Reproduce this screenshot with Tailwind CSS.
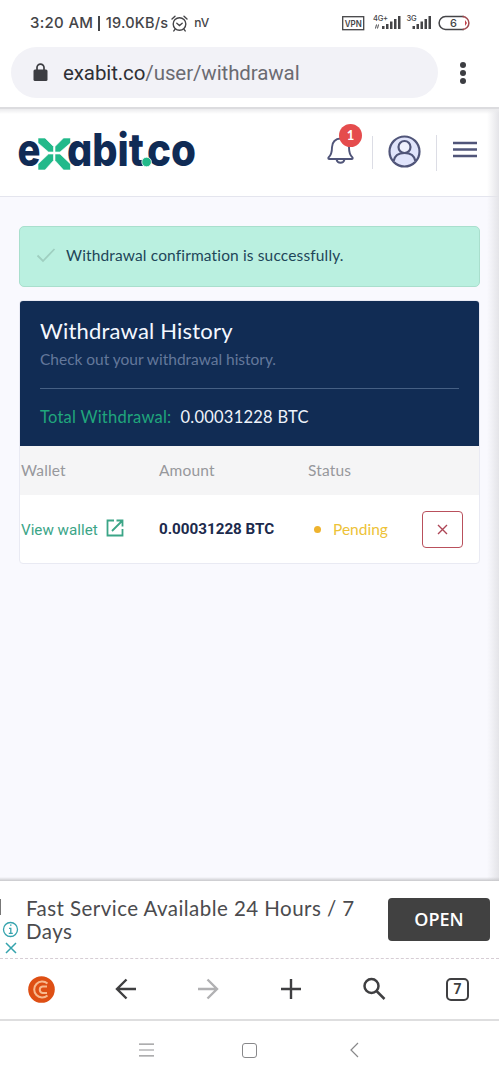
<!DOCTYPE html>
<html lang="en">
<head>
<meta charset="utf-8">
<title>Withdrawal History</title>
<script src="https://cdn.jsdelivr.net/npm/@tailwindcss/browser@4"></script>
</head>
<body class="w-[499px] h-[1080px] overflow-hidden bg-white font-['Lato',sans-serif] flex flex-col whitespace-nowrap">

<!-- status bar -->
<div class="h-[46px] shrink-0 flex items-center pl-[30px] pr-[29px] text-[#444447]">
  <span class="font-['Inter',sans-serif] text-[15px] font-medium tracking-[0.3px]">3:20 AM</span>
  <span class="w-[1.500px] h-[15px] bg-[#444447] ml-[5px] mr-[6px]"></span>
  <span class="font-['Inter',sans-serif] text-[14.500px] font-medium tracking-[0.2px]">19.0KB/s</span>
  <svg class="ml-[3px] size-[17px]" viewBox="0 0 17 17" fill="none" stroke="#444447" stroke-width="1.4" stroke-linecap="round"><circle cx="8.5" cy="9" r="6.3"/><path d="M1 4 4 1.3M16 4 13 1.3M5.8 8.3l2.7 2.2 2.7-2.2M4 14.3l-1.2 1.6M13 14.3l1.2 1.6"/></svg>
  <span class="font-['Inter',sans-serif] text-[12px] font-medium ml-[6px]">nV</span>
  <svg class="ml-auto w-[128px] h-[20px]" viewBox="342 13 128 20" font-family="Inter, sans-serif" fill="#444447">
    <rect x="342.7" y="16.7" width="21" height="13" fill="none" stroke="#444447" stroke-width="1.3"/>
    <text x="344.8" y="26.5" font-size="8.500" font-weight="600" textLength="17" lengthAdjust="spacingAndGlyphs">VPN</text>
    <text x="373" y="20.6" font-size="7.5" font-weight="500" textLength="15">4G+</text>
    <path d="M375.5 28.5l1-4M378.500 24.500l-1 4" stroke="#444447" fill="none"/>
    <path d="M382 26h2.500v3H382zM386 24h2.500v5H386zM390 21.500h2.500v7.500H390zM394 19h2.500v10H394zM398 16h2.500v13H398z"/>
    <text x="406.500" y="20.6" font-size="7.5" font-weight="500" textLength="10">3G</text>
    <path d="M412.500 26h2.500v3h-2.500zM416.500 24h2.500v5h-2.500zM420.500 21.500h2.500v7.500h-2.500zM424.500 19h2.500v10h-2.500zM428.500 16h2.500v13h-2.500z"/>
    <path d="M464 16.600h-18.500a6.400 6.400 0 0 0 0 12.800H464" fill="none" stroke="#444447" stroke-width="1.5"/>
    <path d="M462.500 16.600a6.400 6.400 0 0 1 0 12.800" fill="none" stroke="#a04a50" stroke-width="1.5"/>
    <path d="M465 20v6l2-3z" fill="#c2404a"/>
    <text x="453.500" y="27" font-size="11" font-weight="500" text-anchor="middle">6</text>
  </svg>
</div>

<!-- address bar -->
<div class="h-[63px] shrink-0 flex items-start pt-px pl-[11px] border-b-2 border-[#dcdcdf]">
  <div class="w-[427px] h-[51px] rounded-full bg-[#f2f2f7] flex items-center pl-[22px]">
    <svg class="w-[15px] h-[19px]" viewBox="0 0 15 19"><rect x="0.500" y="6.500" width="14" height="11.500" rx="1.500" fill="#3c3d42"/><path d="M4 7V4.600a3.500 3.500 0 0 1 7 0V7" fill="none" stroke="#3c3d42" stroke-width="1.700"/></svg>
    <span class="font-['Roboto',sans-serif] text-[20.500px] ml-[15px] pt-[2px] text-[#6b6b72] tracking-[-0.1px]"><span class="text-[#2f3035]">exabit.co</span>/user/withdrawal</span>
  </div>
  <div class="ml-[22px] mt-[15px] flex flex-col gap-[2.500px]">
    <span class="size-[5.500px] rounded-full bg-[#3c3d42]"></span>
    <span class="size-[5.500px] rounded-full bg-[#3c3d42]"></span>
    <span class="size-[5.500px] rounded-full bg-[#3c3d42]"></span>
  </div>
</div>

<!-- page -->
<div class="relative h-[772px] shrink-0 bg-[#f9f9fe]">
  <header class="h-[88px] bg-white border-b border-[#e4e5ee] flex items-center pl-[17px] pr-[22px]">
    <svg class="w-[190px] h-[60px]" viewBox="17 123 190 60" font-family="Inter, sans-serif" font-weight="800" font-size="45" fill="#102b55" style="font-feature-settings:'cv11'">
      <text x="17.500" y="166" textLength="23" lengthAdjust="spacingAndGlyphs">e</text>
      <text x="67" y="166" textLength="77" lengthAdjust="spacingAndGlyphs">abit</text>
      <text x="147" y="166" textLength="49" lengthAdjust="spacingAndGlyphs">co</text>
      <g fill="#22b98a" stroke="#fff" stroke-width="0.600">
        <path d="M38 138h7l8.500 8.500v5.500h-5l-10.500-9z"/>
        <path d="M70.500 138h-7L55 146.500v5.500h5l10.500-9z"/>
        <path d="M38 170h7l8.500-9.500V154h-5L38 164z"/>
        <path d="M70.500 170h-7L55 160.500V154h5l10.500 10z"/>
      </g>
      <circle cx="146.600" cy="162" r="4.800" fill="#22b98a" stroke="#fff" stroke-width="0.800"/>
    </svg>
    <div class="ml-auto flex items-center">
      <div class="relative w-[27px] h-[30px] mt-[-5px]">
        <svg class="size-full" viewBox="0 0 27 30" fill="none" stroke="#505579" stroke-width="1.900" stroke-linejoin="round"><path d="M13.500 3.500c-5 0-8.500 3.800-8.500 8.800 0 6-.8 8-3.500 10.200-.5 1 0 1.500.8 1.500h22.400c.8 0 1.300-.5.800-1.500-2.700-2.200-3.500-4.200-3.500-10.200 0-5-3.500-8.800-8.500-8.800z"/><path d="M9.500 24.500c.5 2 2 3.300 4 3.300s3.500-1.300 4-3.300"/></svg>
        <span class="absolute left-[12px] top-[-11px] size-[23px] rounded-full bg-[#e54c4d] text-white text-[13px] font-bold flex items-center justify-center">1</span>
      </div>
      <span class="w-px h-[33px] bg-[#dcdde5] ml-[18px]"></span>
      <svg class="size-[33px] ml-[15px] mt-[-2px]" viewBox="0 0 33 33" fill="#e0e4fb" stroke="#505579" stroke-width="2.200"><circle cx="16.500" cy="16.500" r="15"/><circle cx="16.500" cy="12" r="6" fill="#eef0fd"/><path d="M5.500 26.300c1-5.500 5.500-8.300 11-8.300s10 2.800 11 8.300" /></svg>
      <span class="w-px h-[36px] bg-[#dcdde5] ml-[15px]"></span>
      <svg class="ml-[16px] mt-[-7px] w-[24px] h-[17px]" viewBox="0 0 24 17" stroke="#505579" stroke-width="2.300"><path d="M0 2h24M0 8.500h24M0 15h24"/></svg>
    </div>
  </header>

  <main class="pt-[29px] pl-[19px] pr-[19px]">
    <div class="h-[61px] rounded-[5px] bg-[#baf0e0] border-[1.500px] border-[#a9dfcd] flex items-center pl-[16px]">
      <svg class="w-[20px] h-[16px] mt-[-3px]" viewBox="0 0 20 16" fill="none" stroke="#9fcfc0" stroke-width="1.800"><path d="M1.500 8.500 7 14 18.500 2"/></svg>
      <span class="ml-[10px] -mt-px text-[15.500px] text-[#1e4659] tracking-[0.14px]">Withdrawal confirmation is successfully.</span>
    </div>

    <section class="mt-[13px] h-[264px] rounded-[4px] bg-white border border-[#e9eaf3] overflow-hidden">
      <div class="h-[145px] bg-[#112c54] px-[20px] pt-[15px]">
        <h1 class="text-[22px] leading-[30px] text-[#f4f8ff] tracking-[0.2px]">Withdrawal History</h1>
        <p class="text-[15.500px] leading-[26px] text-[#64789b] tracking-[-0.02px]">Check out your withdrawal history.</p>
        <div class="mt-[16px] h-px bg-[#466084]"></div>
        <p class="mt-[15px] text-[16.500px] leading-[26px] flex gap-[9px] tracking-[0.24px]"><span class="text-[#20a67c]">Total Withdrawal:</span><span class="text-[#eef3fb]">0.00031228 BTC</span></p>
      </div>
      <div class="h-[49px] bg-[#f5f5f6] grid grid-cols-[138px_149px_1fr] items-center pl-px text-[15.500px] text-[#97989c] tracking-[0.15px]">
        <span>Wallet</span><span>Amount</span><span>Status</span>
      </div>
      <div class="h-[69px] grid grid-cols-[138px_155px_108px_1fr] items-center pl-px">
        <span class="flex items-center gap-[8px] mt-[2px] font-['Roboto',sans-serif] text-[15.200px] text-[#3ba587]">View wallet
          <svg class="size-[18px] mt-[-5px]" viewBox="0 0 18 18" fill="none" stroke="#3ba587" stroke-width="1.800"><path d="M8 1.500H1.500v15h15V10M10.500 1.500h6v6M16.500 1.500 6 12"/></svg>
        </span>
        <span class="font-['Roboto',sans-serif] text-[15.200px] font-bold text-[#1c2a4c]">0.00031228 BTC</span>
        <span class="flex items-center gap-[12px] text-[15.500px] text-[#edc237]"><i class="size-[7px] rounded-full bg-[#eeb32e]"></i>Pending</span>
        <span class="w-[41px] h-[37px] rounded-[4px] border-[1.500px] border-[#b9505c] flex items-center justify-center">
          <svg class="size-[11px]" viewBox="0 0 11 11" stroke="#ad4656" stroke-width="1.400"><path d="M1 1l9 9M10 1l-9 9"/></svg>
        </span>
      </div>
    </section>
  </main>
  <div class="absolute inset-y-0 right-0 w-[12px] bg-linear-to-r from-transparent to-[#e4e4e8]"></div>
  <div class="absolute inset-x-0 top-0 h-[5px] bg-linear-to-b from-[#ebebed] to-transparent"></div>
  <div class="absolute inset-x-0 bottom-0 h-[4px] bg-linear-to-t from-[#c9c9cc] to-transparent"></div>
</div>

<!-- ad banner -->
<div class="h-[78px] shrink-0 bg-white border-b border-dashed border-[#d6cdd4] flex">
  <div class="w-[26px] pt-[18px] flex flex-col">
    <span class="w-px h-[16px] bg-[#777]"></span>
    <svg class="ml-[2px] mt-[6px] size-[17px]" viewBox="0 0 17 17" fill="none" stroke="#35a3ad" stroke-width="1.300"><circle cx="8.500" cy="8.500" r="7"/><path d="M7 7.300h1.800v5M6.800 12.300h4M8 4.200h1.500" /></svg>
    <svg class="ml-[5px] mt-[4px] size-[12px]" viewBox="0 0 12 12" stroke="#35a3ad" stroke-width="1.500"><path d="M1 1l10 10M11 1 1 11"/></svg>
  </div>
  <p class="w-[362px] pt-[16px] text-[20.500px] leading-[23px] text-[#4b4b4e] tracking-[0.45px]">Fast Service Available 24 Hours / 7<br>Days</p>
  <div class="mt-[17px] w-[102px] h-[43px] rounded-[4px] bg-[#414141] text-white text-[18px] font-['Open_Sans',sans-serif] font-semibold flex items-center justify-center">OPEN</div>
</div>

<!-- browser toolbar -->
<div class="h-[62px] shrink-0 border-b-2 border-[#dededf] flex items-center pl-[28px] pr-[30px] justify-between">
  <svg class="size-[27px]" viewBox="0 0 27 27"><circle cx="13.500" cy="13.500" r="13.300" fill="#de4f14"/><path d="M19.500 7.500A8 8 0 1 0 19.500 19.500" fill="none" stroke="#f7b98e" stroke-width="2"/><path d="M19 10.500H14.500a3.300 3.300 0 0 0 0 6.500H19" fill="none" stroke="#f7b98e" stroke-width="2"/></svg>
  <svg class="size-[22px]" viewBox="0 0 22 22" fill="none" stroke="#3f3f41" stroke-width="2.400"><path d="M21 11H2M11.500 1.500 2 11l9.500 9.500"/></svg>
  <svg class="size-[22px]" viewBox="0 0 22 22" fill="none" stroke="#b1b1b3" stroke-width="2.400"><path d="M1 11h19M10.500 1.500 20 11l-9.500 9.500"/></svg>
  <svg class="size-[22px]" viewBox="0 0 22 22" stroke="#3f3f41" stroke-width="2.400"><path d="M1 11h20M11 1v20"/></svg>
  <svg class="size-[24px]" viewBox="0 0 24 24" fill="none" stroke="#3f3f41" stroke-width="2.500"><circle cx="9.500" cy="9" r="7"/><path d="M14.500 14 22.500 22"/></svg>
  <span class="size-[23px] rounded-[5px] border-2 border-[#3f3f41] text-[14px] font-['Roboto',sans-serif] font-bold text-[#3f3f41] flex items-center justify-center">7</span>
</div>

<!-- system navigation -->
<div class="h-[58px] shrink-0 flex items-center pl-[139px]">
  <svg class="w-[15px] h-[14px]" viewBox="0 0 15 14" stroke="#929294" stroke-width="1.200"><path d="M0 1.200h15M0 7h15M0 12.800h15"/></svg>
  <span class="ml-[88px] size-[15px] rounded-[3px] border border-[#88888a]"></span>
  <svg class="ml-[93px] w-[9px] h-[16px]" viewBox="0 0 9 16" fill="none" stroke="#88888a" stroke-width="1.200"><path d="M8 1 1 8l7 7"/></svg>
</div>
</body>
</html>
